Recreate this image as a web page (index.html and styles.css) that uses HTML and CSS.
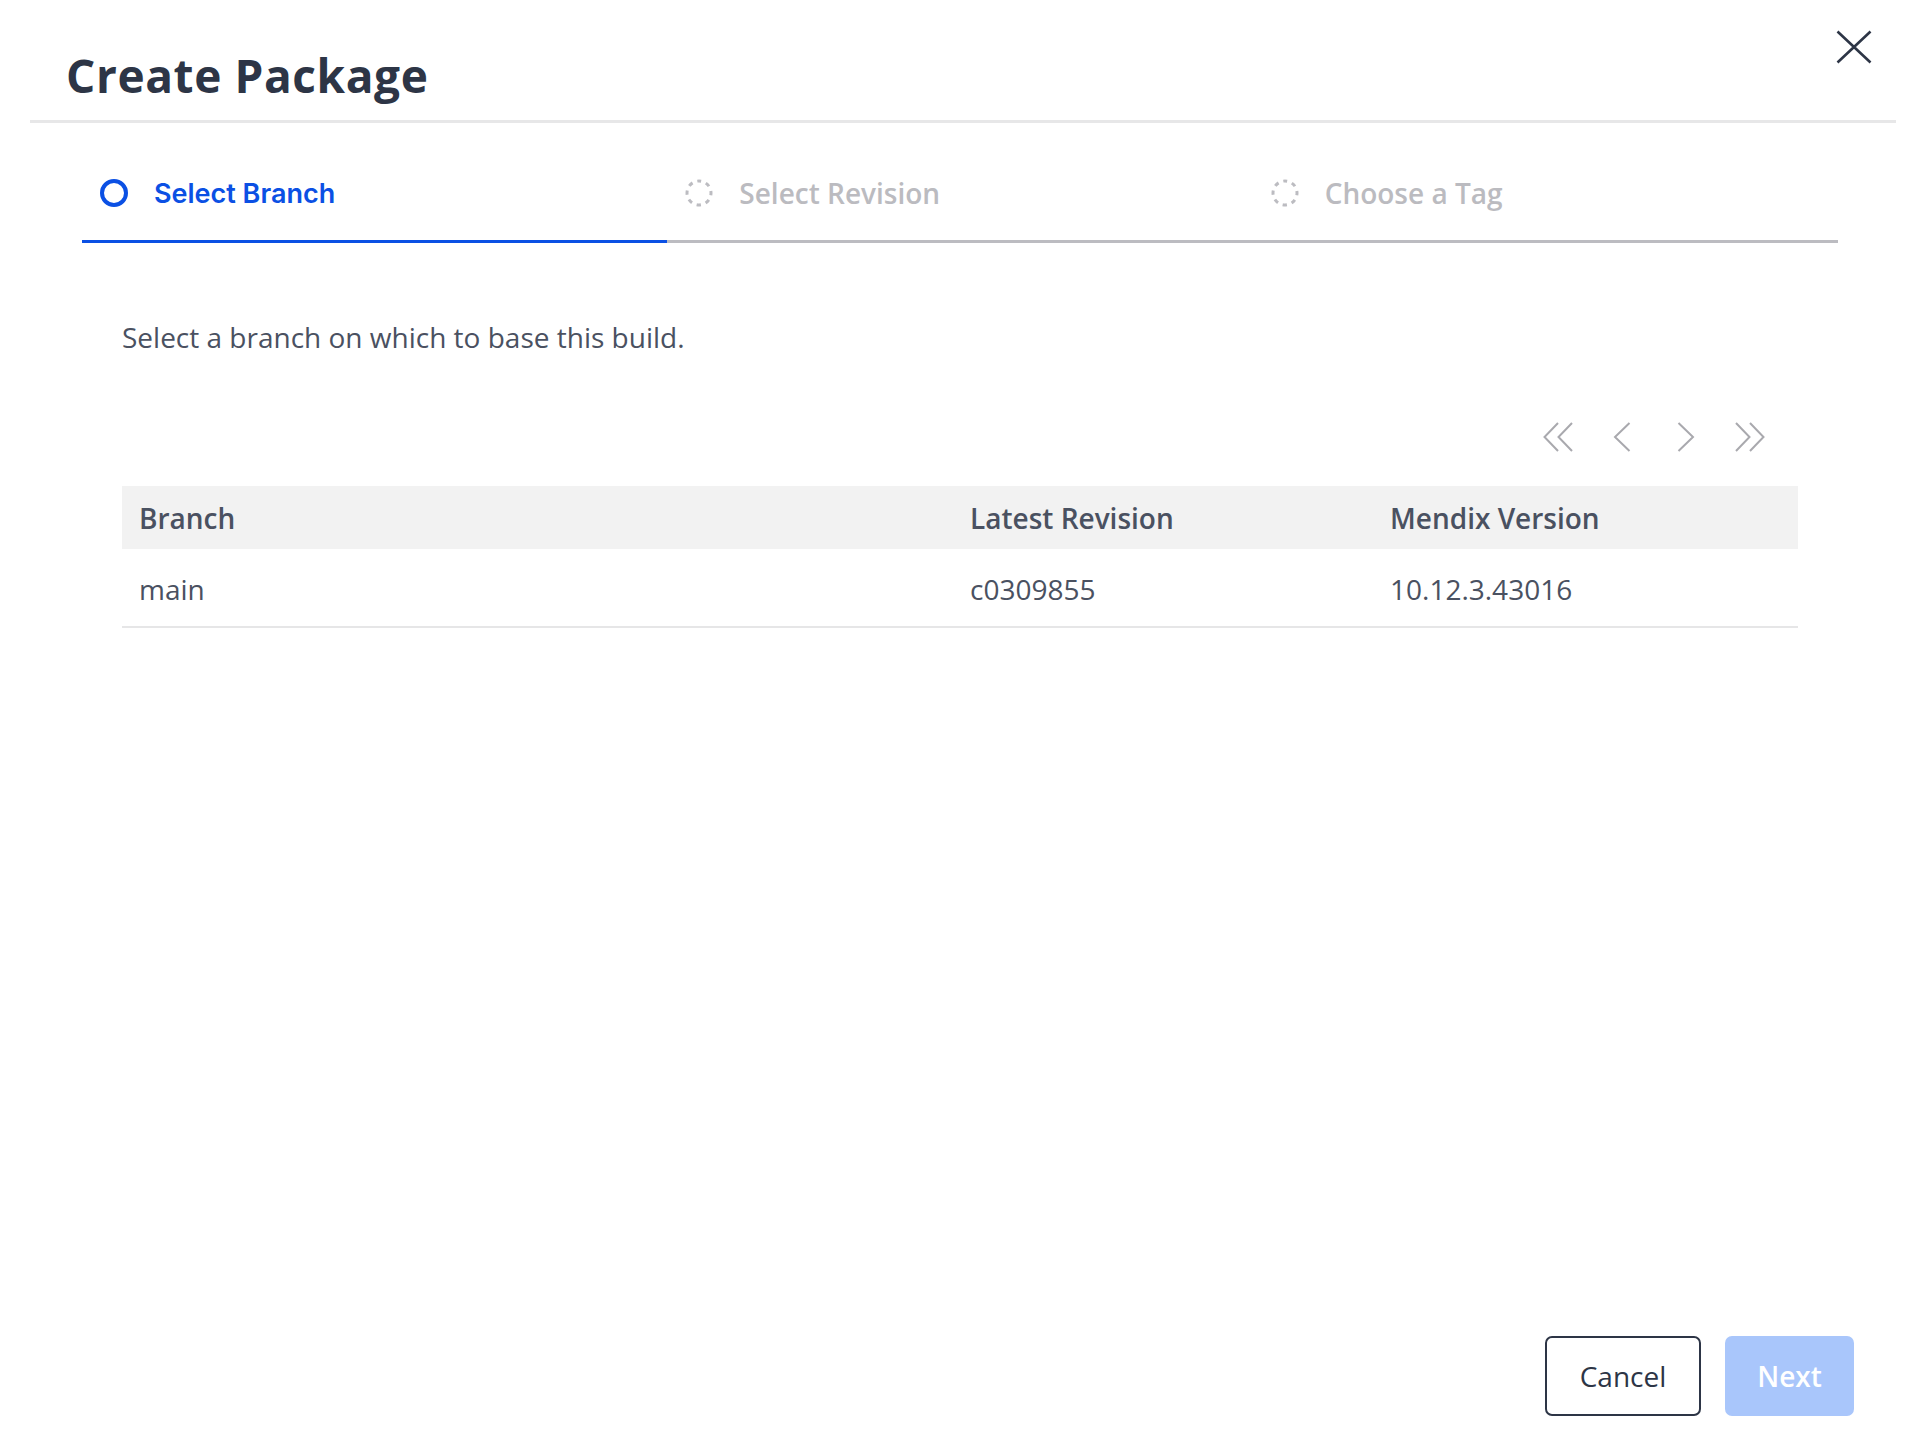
FILE: index.html
```html
<!DOCTYPE html>
<html lang="en">
<head>
<meta charset="utf-8">
<title>Create Package</title>
<link rel="stylesheet" href="styles.css">
</head>
<body>
<div class="dialog">
  <header class="dlg-header">
    <h1 class="title">Create Package</h1>
    <button class="close" aria-label="Close">
      <svg width="36" height="34" viewBox="0 0 36 34"><path d="M1.5 1.5 L34.5 32.5 M34.5 1.5 L1.5 32.5" stroke="#2d3546" stroke-width="2.6" fill="none"/></svg>
    </button>
  </header>

  <nav class="steps">
    <div class="step active">
      <svg class="step-icon" width="28" height="28" viewBox="0 0 28 28"><circle cx="14" cy="14" r="12" fill="none" stroke="#0b50e4" stroke-width="4"/></svg>
      <span class="step-label">Select Branch</span>
    </div>
    <div class="step">
      <svg class="step-icon" width="28" height="28" viewBox="0 0 28 28"><circle cx="14" cy="14" r="12" fill="none" stroke="#bcbcc1" stroke-width="3" stroke-dasharray="4.4 5.02" stroke-dashoffset="2.2" transform="rotate(-90 14 14)"/></svg>
      <span class="step-label">Select Revision</span>
    </div>
    <div class="step">
      <svg class="step-icon" width="28" height="28" viewBox="0 0 28 28"><circle cx="14" cy="14" r="12" fill="none" stroke="#bcbcc1" stroke-width="3" stroke-dasharray="4.4 5.02" stroke-dashoffset="2.2" transform="rotate(-90 14 14)"/></svg>
      <span class="step-label">Choose a Tag</span>
    </div>
  </nav>

  <main class="content">
    <p class="desc">Select a branch on which to base this build.</p>

    <div class="pager">
      <button class="pg-btn" aria-label="First page"><svg width="30" height="30" viewBox="0 0 30 30"><path d="M15 1 L1.5 15 L15 29 M29 1 L15.5 15 L29 29" fill="none" stroke="#a9a9ae" stroke-width="2"/></svg></button>
      <button class="pg-btn" aria-label="Previous page"><svg width="30" height="30" viewBox="0 0 30 30"><path d="M22.5 1 L8 15 L22.5 29" fill="none" stroke="#a9a9ae" stroke-width="2"/></svg></button>
      <button class="pg-btn" aria-label="Next page"><svg width="30" height="30" viewBox="0 0 30 30"><path d="M7.5 1 L22 15 L7.5 29" fill="none" stroke="#a9a9ae" stroke-width="2"/></svg></button>
      <button class="pg-btn" aria-label="Last page"><svg width="30" height="30" viewBox="0 0 30 30"><path d="M1 1 L14.5 15 L1 29 M15 1 L28.5 15 L15 29" fill="none" stroke="#a9a9ae" stroke-width="2"/></svg></button>
    </div>

    <div class="table">
      <div class="tr th">
        <div class="cell">Branch</div>
        <div class="cell">Latest Revision</div>
        <div class="cell">Mendix Version</div>
      </div>
      <div class="tr td">
        <div class="cell">main</div>
        <div class="cell">c0309855</div>
        <div class="cell">10.12.3.43016</div>
      </div>
    </div>
  </main>

  <footer class="footer">
    <button class="btn btn-cancel">Cancel</button>
    <button class="btn btn-next" disabled>Next</button>
  </footer>
</div>
</body>
</html>
```

FILE: styles.css
```css
html, body {
  margin: 0;
  padding: 0;
  background: #ffffff;
}
body {
  font-family: "Open Sans", "Noto Sans", "Liberation Sans", sans-serif;
  color: #2d3546;
}
.dialog {
  min-height: 100vh;
  box-sizing: border-box;
  padding: 0 30px;
  display: flex;
  flex-direction: column;
}
.dlg-header {
  display: flex;
  justify-content: space-between;
  align-items: flex-start;
  height: 120px;
  border-bottom: 3px solid #e7e7e8;
}
.title {
  margin: 0;
  padding: 44px 0 0 36px;
  font-size: 46px;
  line-height: 62px;
  font-weight: 700;
  letter-spacing: 0.6px;
  color: #2d3546;
}
.close {
  margin: 30px 24px 0 0;
  padding: 0;
  border: 0;
  background: none;
  width: 36px;
  height: 34px;
  cursor: pointer;
}
.close svg { display: block; }

.steps {
  margin-left: 52px;
  width: 1756px;
  display: grid;
  grid-template-columns: repeat(3, 1fr);
}
.step {
  display: flex;
  align-items: center;
  gap: 26px;
  padding: 56px 0 33px 18px;
  border-bottom: 3px solid #bcbcc1;
}
.step.active {
  border-bottom-color: #0b50e4;
}
.step-icon { display: block; flex: none; }
.step-label {
  font-size: 28px;
  line-height: 28px;
  font-weight: 600;
  color: #bbbbc0;
}
.step.active .step-label {
  font-family: Inter, "Noto Sans", sans-serif;
  font-size: 27px;
  line-height: 26px;
  padding-top: 2px;
  color: #0b50e4;
}

.content {
  padding: 0 98px 0 92px;
}
.desc {
  margin: 75px 0 0;
  font-size: 28px;
  line-height: 38px;
  color: #4a5161;
}
.pager {
  margin-top: 66px;
  display: flex;
  justify-content: flex-end;
  padding-right: 16px;
}
.pg-btn {
  width: 64px;
  height: 30px;
  padding: 0;
  border: 0;
  background: none;
  display: flex;
  justify-content: center;
  align-items: center;
  cursor: pointer;
}
.pg-btn svg { display: block; }

.table {
  margin-top: 34px;
}
.tr {
  display: grid;
  grid-template-columns: 830px 420px 1fr;
  align-items: center;
  font-size: 28px;
  line-height: 38px;
  color: #4a5161;
}
.th {
  height: 63px;
  background: #f2f2f2;
  font-weight: 600;
}
.td {
  height: 79px;
  padding-top: 2px;
  box-sizing: border-box;
  border-bottom: 2px solid #e6e6e7;
}
.cell {
  padding-left: 17px;
}
.cell + .cell {
  padding-left: 18px;
}

.footer {
  margin-top: auto;
  display: flex;
  justify-content: flex-end;
  gap: 24px;
  padding: 0 42px 30px 0;
}
.btn {
  height: 80px;
  box-sizing: border-box;
  border-radius: 7px;
  font-family: "Open Sans", "Noto Sans", sans-serif;
  font-size: 28px;
  line-height: 38px;
  padding: 0;
  cursor: pointer;
}
.btn-cancel {
  width: 156px;
  border: 2px solid #2d3546;
  background: #ffffff;
  color: #2d3546;
}
.btn-next {
  width: 129px;
  border: 0;
  background: #a9c6fb;
  color: #ffffff;
  font-weight: 600;
  cursor: default;
}
```
